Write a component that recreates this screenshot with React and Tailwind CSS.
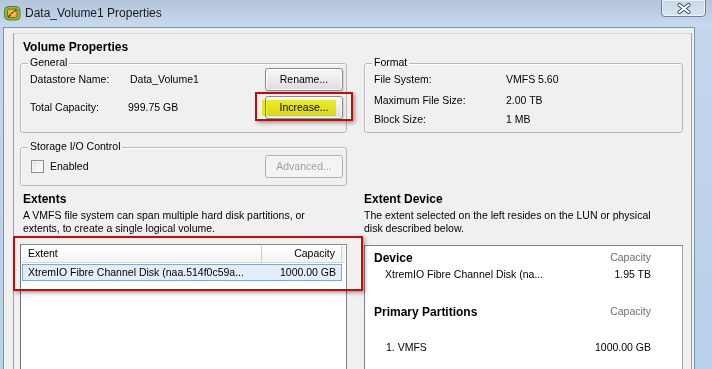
import React from "react";

function Btn({ children, disabled }) {
  return (
    <div
      className={
        disabled
          ? "w-[78px] h-[23px] shrink-0 rounded-[3px] border border-[#adb2b5] bg-[#f4f4f4] text-[#a0a0a0] flex items-center justify-center"
          : "w-[78px] h-[23px] shrink-0 rounded-[3px] border border-[#8a8a8a] bg-linear-to-b from-[#f7f7f7] via-[#ececec] to-[#dcdcdc] shadow-[inset_0_0_0_1px_#fdfdfd,1px_1px_2px_rgba(0,0,0,0.15)] flex items-center justify-center"
      }
    >
      {children}
    </div>
  );
}

function Group({ label, className, children }) {
  return (
    <div className={"relative border border-[#b9b9b9] rounded-[3px] shadow-[inset_1px_1px_0_#ffffff] " + className}>
      <span className="absolute -top-[8px] left-[7px] px-[2px] bg-[#f0f0f0] leading-[13px]">{label}</span>
      {children}
    </div>
  );
}

function AppIcon() {
  return (
    <svg width="17" height="15" viewBox="0 0 17 15">
      <rect x="0.5" y="0.5" width="15.5" height="13.5" rx="4" fill="#86bd4a" stroke="#4b8420" />
      <rect x="3.5" y="3" width="9.5" height="8.5" rx="1.5" fill="#f3b23a" stroke="#9a5e14" />
      <path d="M4 11 L12.5 3.5" stroke="#6b3e0a" strokeWidth="1.6" />
      <path d="M7 8.5 L10 8.5 L10 5.5" fill="none" stroke="#fbe08a" strokeWidth="1" />
    </svg>
  );
}

function CloseX() {
  return (
    <svg width="14" height="11" viewBox="0 0 14 11">
      <path d="M2.5 2 L11.5 9 M11.5 2 L2.5 9" stroke="#3c4b60" strokeWidth="4" strokeLinecap="round" />
      <path d="M2.5 2 L11.5 9 M11.5 2 L2.5 9" stroke="#ffffff" strokeWidth="2.2" strokeLinecap="round" />
    </svg>
  );
}

export default function App() {
  return (
    <div className="relative w-[712px] h-[369px] overflow-hidden flex flex-col bg-linear-to-b from-[#c3d6ec] to-[#b9d0ea] text-[10.5px] text-black font-['Liberation_Sans',Arial,sans-serif]">
      {/* Title bar */}
      <div className="relative h-[27px] shrink-0 flex items-start bg-linear-to-b from-[#b4c5da] to-[#c7daf0]">
        <div className="ml-[4px] mt-[6px]">
          <AppIcon />
        </div>
        <div className="ml-[4px] mt-[6px] text-[12px] leading-[15px] text-[#1a1a1a]">Data_Volume1 Properties</div>
        <div className="ml-auto mr-[6px] -mt-px w-[45px] h-[18px] rounded-b-[4px] border border-[#6f8097] bg-linear-to-b from-[#c8d6e8] to-[#d7e4f3] shadow-[inset_0_0_0_1px_rgba(255,255,255,0.6)] flex items-center justify-center">
          <CloseX />
        </div>
      </div>

      {/* Window body */}
      <div className="flex-1 flex flex-col ml-[3px] w-[692px] bg-[#f0f0f0] border-l border-t border-r border-[#8193aa] pl-[9px] pt-[5px]">
        <div className="flex-1 flex flex-col w-[679px] border-l border-t border-r border-[#a0a0a0] border-t-[#d6d6d6] pl-[6px]">
          <div className="mt-[6px] pl-[3px] leading-[14px] font-bold text-[12px]">Volume Properties</div>

          <div className="mt-[9px] flex gap-[17px]">
            <Group label="General" className="w-[327px] h-[70px] pt-[4px] pl-[9px] pr-[3px]">
              <div className="flex items-center h-[23px]">
                <span className="w-[100px]">Datastore Name:</span>
                <span className="flex-1">Data_Volume1</span>
                <Btn>Rename...</Btn>
              </div>
              <div className="flex items-center h-[23px] mt-[5px]">
                <span className="w-[98px]">Total Capacity:</span>
                <span className="flex-1">999.75 GB</span>
                <Btn>Increase...</Btn>
              </div>
            </Group>
            <Group label="Format" className="w-[319px] h-[70px] pt-[9px] pl-[9px]">
              <div className="flex h-[13px] leading-[13px]">
                <span className="w-[132px]">File System:</span>
                <span>VMFS 5.60</span>
              </div>
              <div className="flex h-[13px] leading-[13px] mt-[8px]">
                <span className="w-[132px]">Maximum File Size:</span>
                <span>2.00 TB</span>
              </div>
              <div className="flex h-[13px] leading-[13px] mt-[6px]">
                <span className="w-[132px]">Block Size:</span>
                <span>1 MB</span>
              </div>
            </Group>
          </div>

          <Group label="Storage I/O Control" className="mt-[14px] w-[327px] h-[39px] pt-[7px] pl-[10px] pr-[3px]">
            <div className="flex items-center h-[23px]">
              <span className="w-[13px] h-[13px] border border-[#8e8f8f] bg-linear-to-br from-[#dadada] via-[#f4f4f4] to-white shadow-[inset_0_0_0_1px_#f4f4f4]" />
              <span className="ml-[6px] flex-1">Enabled</span>
              <Btn disabled>Advanced...</Btn>
            </div>
          </Group>

          <div className="mt-[6px] flex gap-[17px] flex-1">
            {/* Extents */}
            <div className="w-[327px] flex flex-col">
              <div className="pl-[3px] leading-[14px] font-bold text-[12px]">Extents</div>
              <div className="pl-[3px] mt-[3px] leading-[13px] whitespace-nowrap">
                A VMFS file system can span multiple hard disk partitions, or
                <br />
                extents, to create a single logical volume.
              </div>
              <div className="mt-[9px] h-[200px] border border-[#828790] border-l-[#6e737b] bg-white p-px">
                <div className="flex h-[17px] border-b border-[#d5d5d5] bg-linear-to-b from-white to-[#f2f3f5]">
                  <div className="w-[240px] pl-[6px] border-r border-[#cfcfcf] flex items-center">Extent</div>
                  <div className="w-[80px] pr-[6px] border-r border-[#cfcfcf] flex items-center justify-end">Capacity</div>
                  <div className="flex-1 bg-[#f3f3f3]" />
                </div>
                <div className="mt-[1px] w-[320px] h-[17px] border border-[#84a9d6] bg-[#e4eefa] flex items-center justify-between pl-[5px] pr-[5px]">
                  <span>XtremIO Fibre Channel Disk (naa.514f0c59a...</span>
                  <span>1000.00 GB</span>
                </div>
              </div>
            </div>

            {/* Extent Device */}
            <div className="w-[319px] flex flex-col">
              <div className="leading-[14px] font-bold text-[12px]">Extent Device</div>
              <div className="mt-[3px] leading-[13px] whitespace-nowrap">
                The extent selected on the left resides on the LUN or physical
                <br />
                disk described below.
              </div>
              <div className="mt-[10px] h-[200px] border border-[#9a9ea5] border-l-[#7c8088] border-t-[#7c8088] bg-white pl-[9px] pr-[31px] pt-[5px]">
                <div className="flex justify-between items-center h-[14px]">
                  <span className="font-bold text-[12px]">Device</span>
                  <span className="text-[#6f6f6f]">Capacity</span>
                </div>
                <div className="flex justify-between items-center h-[14px] mt-[3px] pl-[11px]">
                  <span>XtremIO Fibre Channel Disk (na...</span>
                  <span>1.95 TB</span>
                </div>
                <div className="flex justify-between items-center h-[14px] mt-[23px]">
                  <span className="font-bold text-[12px]">Primary Partitions</span>
                  <span className="text-[#6f6f6f]">Capacity</span>
                </div>
                <div className="flex justify-between items-center h-[14px] mt-[22px] pl-[12px]">
                  <span>1. VMFS</span>
                  <span>1000.00 GB</span>
                </div>
              </div>
            </div>
          </div>
        </div>
      </div>

      {/* Annotations */}
      <div className="absolute left-[262px] top-[100px] w-[74px] h-[16px] bg-[#f5f526] mix-blend-multiply" />
      <div className="absolute left-[255px] top-[92px] w-[98px] h-[29px] border-2 border-[#c40b0b] shadow-[2px_2px_4px_rgba(0,0,0,0.35)]" />
      <div className="absolute left-[13px] top-[236px] w-[350px] h-[55px] border-2 border-[#c40b0b] shadow-[2px_2px_4px_rgba(0,0,0,0.35)]" />
    </div>
  );
}
